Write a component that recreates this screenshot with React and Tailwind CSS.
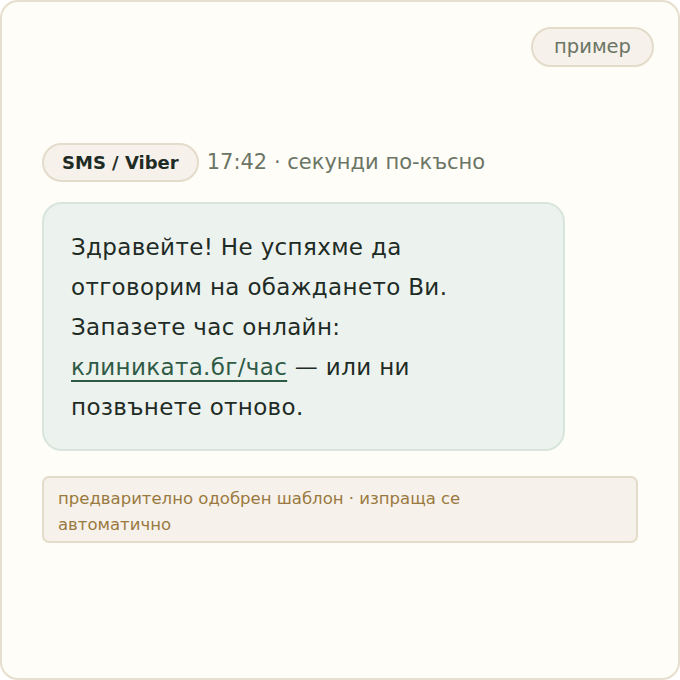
export default function App() {
  return (
    <div
      lang="bg"
      className="w-[680px] h-[680px] bg-[#fffdf7] border-2 border-[#e6dfcf] rounded-[18px] px-[24px] pt-[25px] flex flex-col"
      style={{ fontFamily: "'DejaVu Sans', 'Noto Sans', sans-serif" }}
    >
      <div className="flex justify-end">
        <span className="h-[40px] px-[21px] rounded-full bg-[#f6f1ea] border-2 border-[#e4dccb] text-[#6b7565] text-[19.5px] flex items-center">
          пример
        </span>
      </div>

      <div className="px-[16px] flex flex-col">
        <div className="mt-[76px] flex items-center gap-[8px]">
          <span className="h-[39px] px-[18px] rounded-full bg-[#f6f1ea] border-2 border-[#e4dccb] text-[#1f2b25] text-[18px] font-bold flex items-center">
            SMS / Viber
          </span>
          <span className="text-[21px] text-[#6b7565]">17:42 · секунди по-късно</span>
        </div>

        <div className="mt-[20px] w-[523px] bg-[#ecf2ee] border-2 border-[#d8e5dc] rounded-[20px] pl-[27px] pr-[16px] pt-[23px] pb-[22px] text-[23px] leading-[40px] tracking-[0.015em] text-[#1f2b25]">
          Здравейте! Не успяхме да
          <br />
          отговорим на обаждането Ви.
          <br />
          Запазете час онлайн:
          <br />
          <span className="text-[#2f5a45] underline underline-offset-[5px] decoration-[2px]">клиниката.бг/час</span> — или ни
          <br />
          позвънете отново.
        </div>

        <div className="mt-[25px] bg-[#f6f1ea] border-2 border-[#e4dccb] rounded-[7px] pl-[14px] pr-[12px] pt-[8px] pb-[3px] text-[16.5px] leading-[26px] text-[#9a7940]">
          предварително одобрен шаблон · изпраща се
          <br />
          автоматично
        </div>
      </div>
    </div>
  );
}
